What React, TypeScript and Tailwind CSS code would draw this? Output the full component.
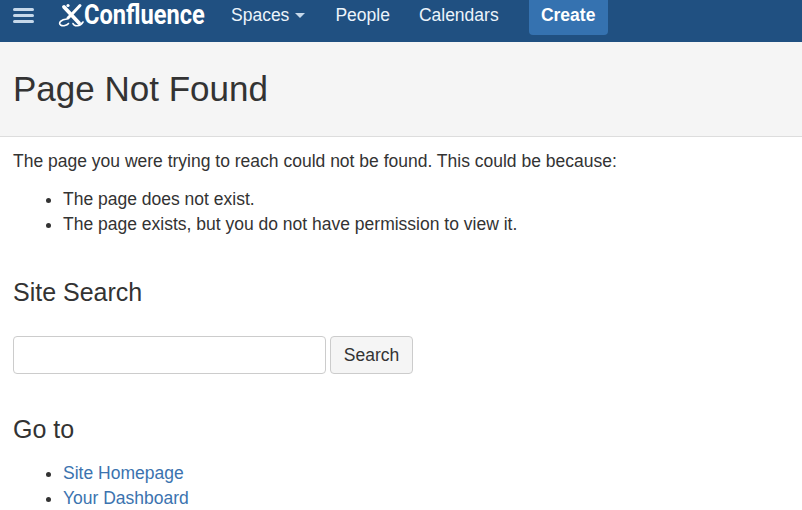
export default function App() {
  return (
    <div className="h-[510px] w-[802px] overflow-hidden bg-white font-['Liberation_Sans',Arial,sans-serif] text-[17.5px] text-[#333]">
      <header className="flex h-[42px] items-start bg-[#205081] text-[17.5px] text-[#ecf4fb]">
        <div className="ml-[13px] mt-[8px] flex w-[21px] flex-col gap-[3px]">
          <span className="h-[3px] rounded-sm bg-[#c6d8ea]" />
          <span className="h-[3px] rounded-sm bg-[#c6d8ea]" />
          <span className="h-[3px] rounded-sm bg-[#c6d8ea]" />
        </div>
        <svg className="ml-[24px] mt-[3px] h-[24px] w-[26px]" viewBox="0 0 26 24" fill="none" stroke="white" strokeLinecap="round">
          <path d="M6 4 L21 20" strokeWidth="3.8" />
          <path d="M22 2.5 L15 10 L10 15" strokeWidth="3" />
          <circle cx="10" cy="2.5" r="1.6" fill="white" stroke="none" />
          <path d="M9 16 C3 16.5 0 20 2.5 22 C5 23.5 9 22.5 10.5 20.5" strokeWidth="1.6" />
          <path d="M15 20.5 C16 23.5 22 24 25 19" strokeWidth="1.6" />
        </svg>
        <span className="mt-0 w-[123px] origin-left scale-x-[0.875] whitespace-nowrap font-['Roboto',sans-serif] text-[27px] font-bold leading-[30px] text-white">
          Confluence
        </span>
        <nav className="ml-[24px] flex items-start">
          <a className="mt-[4px] flex items-center gap-[6px] leading-[22px]">
            Spaces
            <span className="h-0 w-0 border-x-[5px] border-t-[5px] border-x-transparent border-t-[#c6d8ea]" />
          </a>
          <a className="ml-[30px] mt-[4px] leading-[22px]">People</a>
          <a className="ml-[29px] mt-[4px] leading-[22px]">Calendars</a>
          <a className="ml-[30px] flex h-[35px] w-[79px] items-center justify-center rounded-b bg-[#3572b0] pb-[5px] font-bold text-white">
            Create
          </a>
        </nav>
      </header>

      <div className="h-[95px] border-b border-[#ddd] bg-[#f5f5f5] px-[13px] pt-[27px]">
        <h1 className="text-[35px] leading-[40px]">Page Not Found</h1>
      </div>

      <main className="px-[13px]">
        <p className="mt-[12px] leading-[25px]">The page you were trying to reach could not be found. This could be because:</p>
        <ul className="mt-[13px] list-disc pl-[50px] leading-[25px]">
          <li>The page does not exist.</li>
          <li>The page exists, but you do not have permission to view it.</li>
        </ul>

        <h2 className="mt-[40px] text-[25px] leading-[30px]">Site Search</h2>
        <form className="mt-[29px] flex gap-[4px]">
          <input className="h-[38px] w-[313px] rounded border border-[#ccc] bg-white" />
          <button type="button" className="h-[38px] w-[83px] rounded border border-[#ccc] bg-[#f5f5f5] text-[17.5px] text-[#333]">
            Search
          </button>
        </form>

        <h2 className="mt-[40px] text-[25px] leading-[30px]">Go to</h2>
        <ul className="mt-[17px] list-disc pl-[50px] leading-[25px] text-[#3b73af]">
          <li className="marker:text-[#333]">Site Homepage</li>
          <li className="marker:text-[#333]">Your Dashboard</li>
        </ul>
      </main>
    </div>
  );
}
